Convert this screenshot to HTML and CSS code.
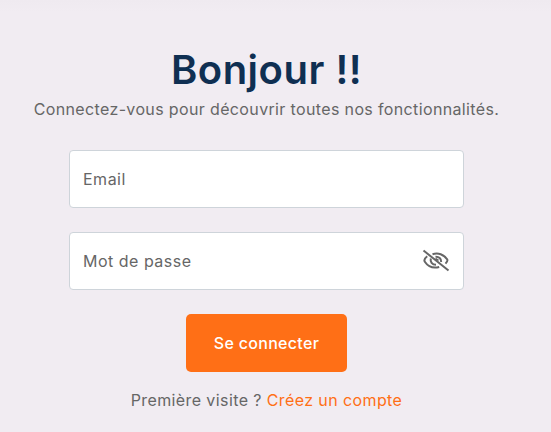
FILE: index.html
```
<!DOCTYPE html>
<html lang="fr">
<head>
<meta charset="utf-8">
<title>Connexion</title>
<link rel="stylesheet" href="styles.css">
</head>
<body>
<main class="login">
  <h1 class="title">Bonjour !!</h1>
  <p class="subtitle">Connectez-vous pour découvrir toutes nos fonctionnalités.</p>
  <form class="form">
    <div class="field"><span class="label-email">Email</span></div>
    <div class="field"><span class="label-password">Mot de passe</span>
      <svg class="eye" width="28" height="24" viewBox="0 0 28 24" fill="none" stroke="#666" stroke-width="2">
        <path d="M1.5 1.5 26.5 21.5"/>
        <path d="M10.5 5.2C16 3.4 22 5.2 25.3 10.6Q26 12 23.5 14.6"/>
        <path d="M5.2 7.2C2.7 9.2 1.7 11.3 3 13C6.2 17.7 11.5 19.5 17.2 18"/>
        <path d="M8.8 9.5C8 12.7 10 15.7 14 15.8M13.5 7.7C17 7.5 19.4 9.7 19.2 13"/>
        <path d="M13.5 9.5Q14.5 11 16.5 11"/>
      </svg>
    </div>
    <button class="submit" type="button">Se connecter</button>
  </form>
  <p class="signup"><span class="question">Première visite ?</span> <a class="link" href="#">Créez un compte</a></p>
</main>
</body>
</html>
```
FILE: styles.css
```
* { box-sizing: border-box; }
body {
  margin: 0;
  height: 432px;
  overflow: hidden;
  background: linear-gradient(#efeaf0 0, #f1ecf2 12px);
  font: 400 16px/24px Inter, "Liberation Sans", sans-serif;
  color: #666;
}
.login {
  width: 533px;
  padding-top: 45px;
  display: flex;
  flex-direction: column;
  align-items: center;
}
.title {
  margin: 0;
  font-size: 40px;
  line-height: 50px;
  font-weight: 600;
  letter-spacing: 0.5px;
  color: #0f2f52;
  white-space: nowrap;
}
.subtitle {
  margin: 2px 0 0;
  letter-spacing: 0.36px;
  white-space: nowrap;
}
.form {
  width: 395px;
  margin-top: 29px;
  display: flex;
  flex-direction: column;
  align-items: center;
  gap: 24px;
}
.field {
  width: 100%;
  height: 58px;
  padding: 0 13px;
  display: flex;
  align-items: center;
  justify-content: space-between;
  background: #fff;
  border: 1px solid #ced4da;
  border-radius: 4px;
}
.label-email { letter-spacing: 0.5px; }
.label-password { letter-spacing: 0.5px; }
.submit {
  width: 161px;
  height: 58px;
  padding: 0;
  border: 0;
  border-radius: 5px;
  background: #ff6f16;
  color: #fff;
  font: inherit;
  font-weight: 500;
  letter-spacing: 0.3px;
}
.signup {
  margin: 16px 0 0;
  letter-spacing: 0.4px;
  white-space: nowrap;
}
.link {
  color: #ff6f16;
  text-decoration: none;
}
```
